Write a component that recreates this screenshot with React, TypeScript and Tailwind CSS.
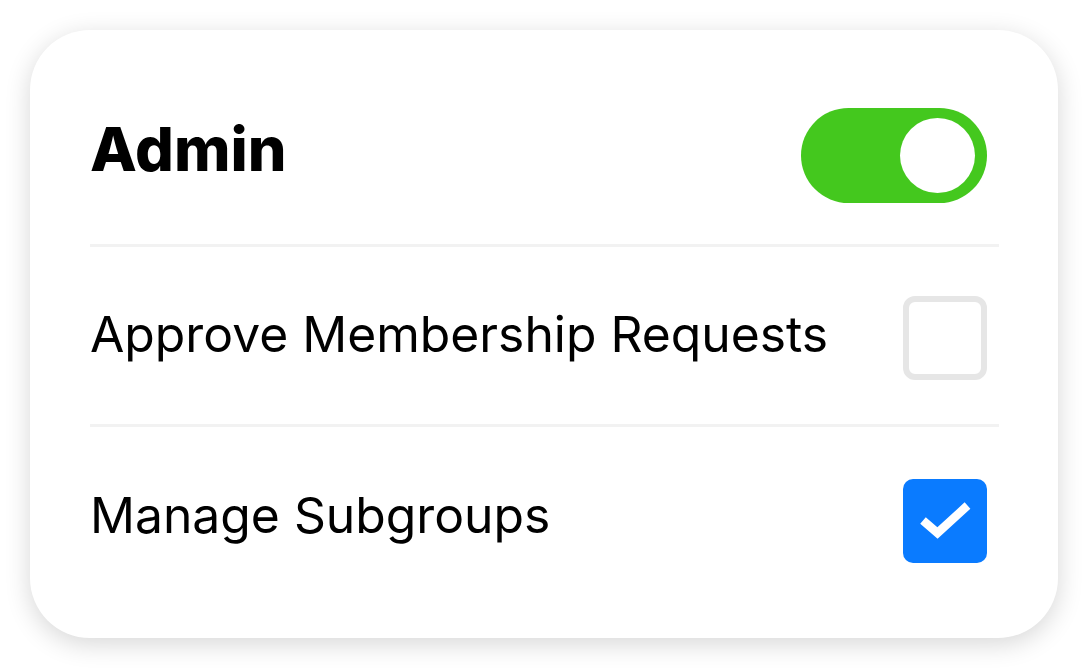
import React from "react";

function Toggle() {
  return (
    <div className="flex h-[95px] w-[186px] items-center justify-end rounded-full bg-[#44c81e] pr-[12px]">
      <div className="h-[75px] w-[75px] rounded-full bg-white" />
    </div>
  );
}

function EmptyBox() {
  return <div className="h-[84px] w-[84px] rounded-[12px] border-[6px] border-[#e6e6e6] bg-white" />;
}

function CheckedBox() {
  return (
    <div className="flex h-[84px] w-[84px] items-center justify-center rounded-[10px] bg-[#0a7bff]">
      <svg width="84" height="84" viewBox="0 0 84 84" fill="none">
        <polyline points="20,41.5 34.5,54 64.5,26.5" stroke="#ffffff" strokeWidth="8.5" strokeLinecap="butt" strokeLinejoin="miter" />
      </svg>
    </div>
  );
}

export default function App() {
  return (
    <div className="min-h-[669px] w-[1089px] bg-white p-[30px] font-['Inter',sans-serif] text-black">
      <div className="flex h-[608px] w-[1028px] flex-col rounded-[60px] bg-white pl-[60px] pr-[59px] pt-[78px] shadow-[0_6px_26px_rgba(0,0,0,0.16)]">
        <div className="flex items-start justify-between">
          <div className="mt-[11px] text-[61px] font-extrabold leading-none">Admin</div>
          <div className="mr-[12px]">
            <Toggle />
          </div>
        </div>
        <div className="mt-[41px] h-[3px] bg-[#f2f2f2]" />
        <div className="mt-[49px] flex items-start justify-between">
          <div className="mt-[14px] text-[49.8px] font-normal leading-none">Approve Membership Requests</div>
          <div className="mr-[12px]">
            <EmptyBox />
          </div>
        </div>
        <div className="mt-[44px] h-[3px] bg-[#f2f2f2]" />
        <div className="mt-[52px] flex items-start justify-between">
          <div className="mt-[12px] text-[49.8px] font-normal leading-none">Manage Subgroups</div>
          <div className="mr-[12px]">
            <CheckedBox />
          </div>
        </div>
      </div>
    </div>
  );
}
